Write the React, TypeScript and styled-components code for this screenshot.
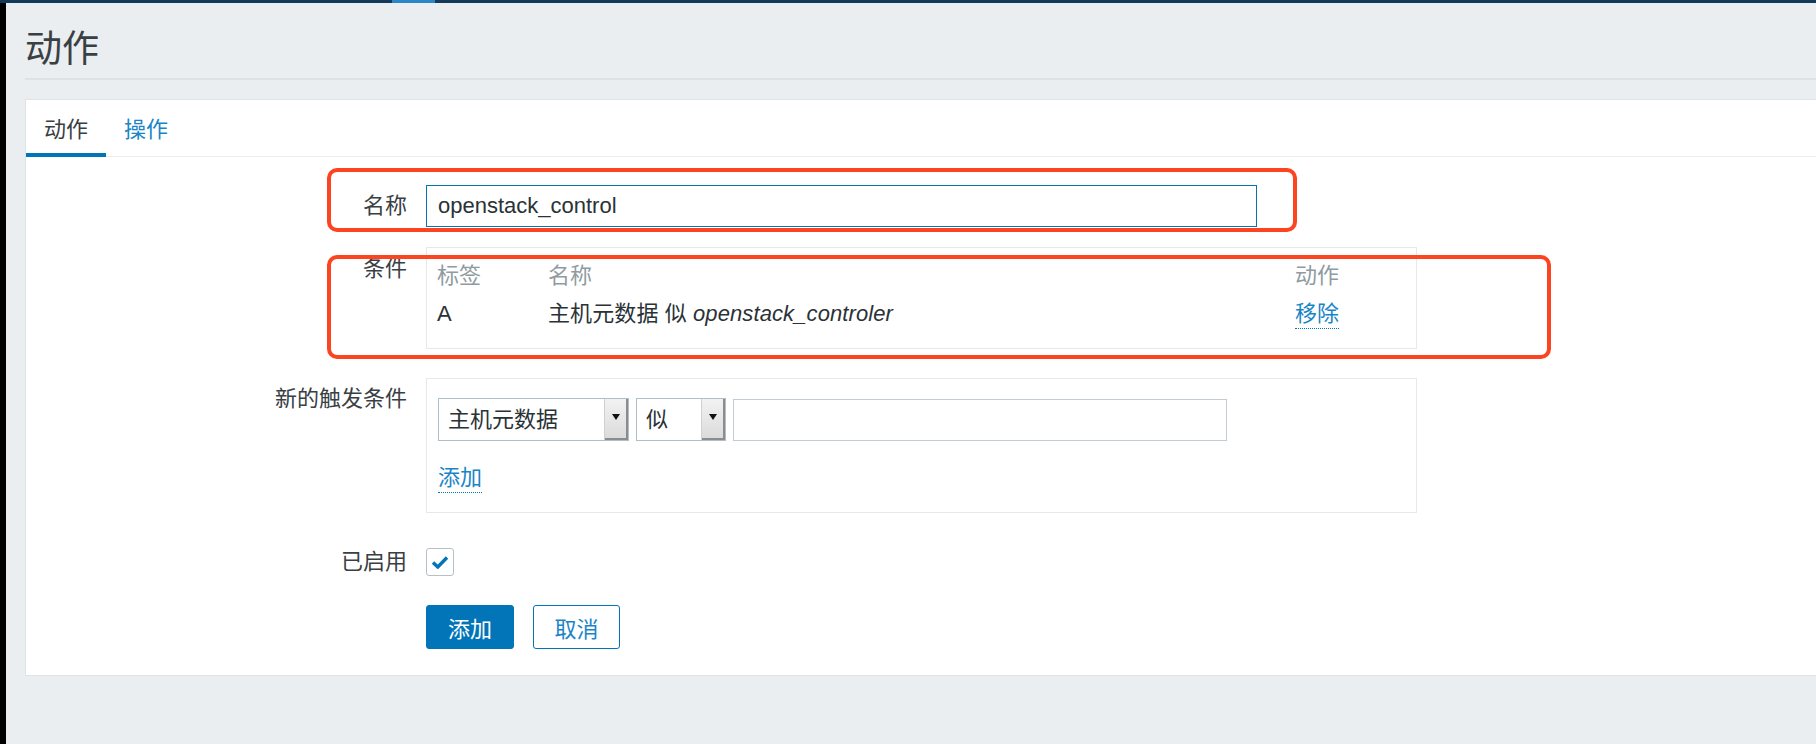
import React from "react";
import styled, { createGlobalStyle } from "styled-components";

const GlobalStyle = createGlobalStyle`
  html, body {
    margin: 0;
    padding: 0;
    background: #ebeef0;
  }
  body {
    font-family: "Liberation Sans", "Noto Sans CJK SC", sans-serif;
    color: #394044;
  }
  * {
    box-sizing: border-box;
  }
`;

const Screen = styled.div`
  width: 1816px;
  height: 744px;
  overflow: hidden;
  display: flex;
  flex-direction: column;
  background: #ebeef0;
`;

const TopBar = styled.div`
  height: 3px;
  flex: none;
  background: #143a5a;
  display: flex;
  padding-left: 392px;
`;

const TopBarActive = styled.div`
  width: 43px;
  background: #2a86c6;
`;

const Body = styled.div`
  flex: 1;
  display: flex;
`;

const WindowEdge = styled.div`
  width: 6px;
  flex: none;
  background: #000;
`;

const Main = styled.div`
  flex: 1;
  padding-left: 19px;
`;

const Header = styled.div`
  height: 77px;
  padding-top: 18px;
  display: flex;
  align-items: center;
  border-bottom: 2px solid #dde2e5;
`;

const Title = styled.h1`
  margin: 0;
  font-size: 37px;
  font-weight: normal;
  color: #394044;
  line-height: 1;
`;

const Card = styled.div`
  margin-top: 19px;
  background: #fff;
  border-top: 1px solid #dfe4e7;
  border-left: 1px solid #dfe4e7;
  border-bottom: 1px solid #dfe4e7;
`;

const TabBar = styled.div`
  display: flex;
  height: 57px;
  border-bottom: 1px solid #ebeef0;
`;

const Tab = styled.div<{ $active?: boolean }>`
  height: 57px;
  padding: 0 18px;
  display: flex;
  align-items: center;
  font-size: 22px;
  color: ${(p) => (p.$active ? "#394044" : "#1a85c6")};
  border-bottom: 4px solid ${(p) => (p.$active ? "#0275b8" : "transparent")};
  margin-bottom: -1px;
`;

const Form = styled.div`
  position: relative;
  padding: 28px 0 26px;
`;

const FormRow = styled.div<{ $top?: number }>`
  display: grid;
  grid-template-columns: 381px 1fr;
  column-gap: 19px;
  margin-top: ${(p) => p.$top ?? 0}px;
  font-size: 22px;
  line-height: 30px;
`;

const Label = styled.div<{ $pad?: number; $center?: boolean }>`
  text-align: right;
  color: #394044;
  padding-top: ${(p) => p.$pad ?? 0}px;
  align-self: ${(p) => (p.$center ? "center" : "start")};
`;

const Field = styled.div`
  display: flex;
  align-items: center;
`;

const TextInput = styled.div<{ $width: number; $focused?: boolean }>`
  width: ${(p) => p.$width}px;
  height: 42px;
  border: 1px solid ${(p) => (p.$focused ? "#0275b8" : "#c3ccd2")};
  padding: 0 11px;
  display: flex;
  align-items: center;
  font-size: 22px;
  color: #2a3236;
  background: #fff;
`;

const Panel = styled.div<{ $pt: number; $pb: number }>`
  width: 991px;
  border: 1px solid #e6e9eb;
  padding: ${(p) => p.$pt}px 10px ${(p) => p.$pb}px;
`;

const CondGrid = styled.div`
  display: grid;
  grid-template-columns: 111px 747px 1fr;
  row-gap: 8px;
`;

const HeadCell = styled.div`
  color: #8f9ba1;
`;

const Cell = styled.div`
  color: #2a3236;
  white-space: nowrap;
  letter-spacing: 0.1px;
`;

const Em = styled.em`
  font-style: italic;
`;

const DottedLink = styled.span`
  color: #1a85c6;
  border-bottom: 1px dotted #0275b8;
  padding-bottom: 2px;
  cursor: pointer;
`;

const Controls = styled.div`
  display: flex;
  gap: 7px;
  align-items: center;
  padding-left: 1px;
`;

const Select = styled.div<{ $width: number }>`
  width: ${(p) => p.$width}px;
  height: 43px;
  border: 1px solid #aebfc9;
  display: flex;
  background: #fff;
`;

const SelectText = styled.div`
  flex: 1;
  padding-left: 9px;
  display: flex;
  align-items: center;
  font-size: 22px;
  color: #2a3236;
`;

const SelectArrow = styled.div`
  width: 24px;
  background: linear-gradient(#f2f2f2, #dadada);
  border-left: 1px solid #d0d0d0;
  box-shadow: inset -2px -2px 0 #8c8c8c;
  display: flex;
  align-items: center;
  justify-content: center;
  &::after {
    content: "";
    border-left: 4px solid transparent;
    border-right: 4px solid transparent;
    border-top: 6px solid #111;
    margin: -6px 2px 0 0;
  }
`;

const LinkLine = styled.div`
  margin-top: 22px;
  padding-left: 1px;
`;

const Checkbox = styled.div`
  width: 28px;
  height: 28px;
  border: 1px solid #b6c0c6;
  border-radius: 3px;
  display: flex;
  align-items: center;
  justify-content: center;
  background: #fff;
`;

const Buttons = styled.div`
  display: flex;
  gap: 19px;
`;

const Button = styled.button<{ $primary?: boolean; $width: number }>`
  width: ${(p) => p.$width}px;
  height: 44px;
  border-radius: 3px;
  border: 1px solid #0275b8;
  background: ${(p) => (p.$primary ? "#0275b8" : "#fff")};
  color: ${(p) => (p.$primary ? "#fff" : "#1a85c6")};
  font-family: "Liberation Sans", "Noto Sans CJK SC", sans-serif;
  font-size: 22px;
  padding: 0;
`;

const Mark = styled.div<{ $left: number; $top: number; $w: number; $h: number }>`
  position: absolute;
  left: ${(p) => p.$left}px;
  top: ${(p) => p.$top}px;
  width: ${(p) => p.$w}px;
  height: ${(p) => p.$h}px;
  border: 4px solid #fd4420;
  border-radius: 10px;
  pointer-events: none;
`;

const Check = () => (
  <svg width="18" height="14" viewBox="0 0 18 14">
    <path d="M2 7.5 L6.8 12 L16 2.5" fill="none" stroke="#0275b8" strokeWidth="3.4" />
  </svg>
);

export default function App() {
  return (
    <>
      <GlobalStyle />
      <Screen>
        <TopBar>
          <TopBarActive />
        </TopBar>
        <Body>
          <WindowEdge />
          <Main>
            <Header>
              <Title>动作</Title>
            </Header>
            <Card>
              <TabBar>
                <Tab $active>动作</Tab>
                <Tab>操作</Tab>
              </TabBar>
              <Form>
                <FormRow>
                  <Label $center>名称</Label>
                  <Field>
                    <TextInput $width={831} $focused>
                      openstack_control
                    </TextInput>
                  </Field>
                </FormRow>

                <FormRow $top={20}>
                  <Label $pad={7}>条件</Label>
                  <Panel $pt={13} $pb={19}>
                    <CondGrid>
                      <HeadCell>标签</HeadCell>
                      <HeadCell>名称</HeadCell>
                      <HeadCell>动作</HeadCell>
                      <Cell>A</Cell>
                      <Cell>
                        主机元数据 似 <Em>openstack_controler</Em>
                      </Cell>
                      <Cell>
                        <DottedLink>移除</DottedLink>
                      </Cell>
                    </CondGrid>
                  </Panel>
                </FormRow>

                <FormRow $top={29}>
                  <Label $pad={6}>新的触发条件</Label>
                  <Panel $pt={19} $pb={19}>
                    <Controls>
                      <Select $width={191}>
                        <SelectText>主机元数据</SelectText>
                        <SelectArrow />
                      </Select>
                      <Select $width={90}>
                        <SelectText>似</SelectText>
                        <SelectArrow />
                      </Select>
                      <TextInput $width={494} />
                    </Controls>
                    <LinkLine>
                      <DottedLink>添加</DottedLink>
                    </LinkLine>
                  </Panel>
                </FormRow>

                <FormRow $top={34}>
                  <Label $center>已启用</Label>
                  <Field>
                    <Checkbox>
                      <Check />
                    </Checkbox>
                  </Field>
                </FormRow>

                <FormRow $top={28}>
                  <div />
                  <Buttons>
                    <Button $primary $width={88}>
                      添加
                    </Button>
                    <Button $width={87}>取消</Button>
                  </Buttons>
                </FormRow>

                <Mark $left={301} $top={11} $w={970} $h={64} />
                <Mark $left={301} $top={98} $w={1224} $h={104} />
              </Form>
            </Card>
          </Main>
        </Body>
      </Screen>
    </>
  );
}
